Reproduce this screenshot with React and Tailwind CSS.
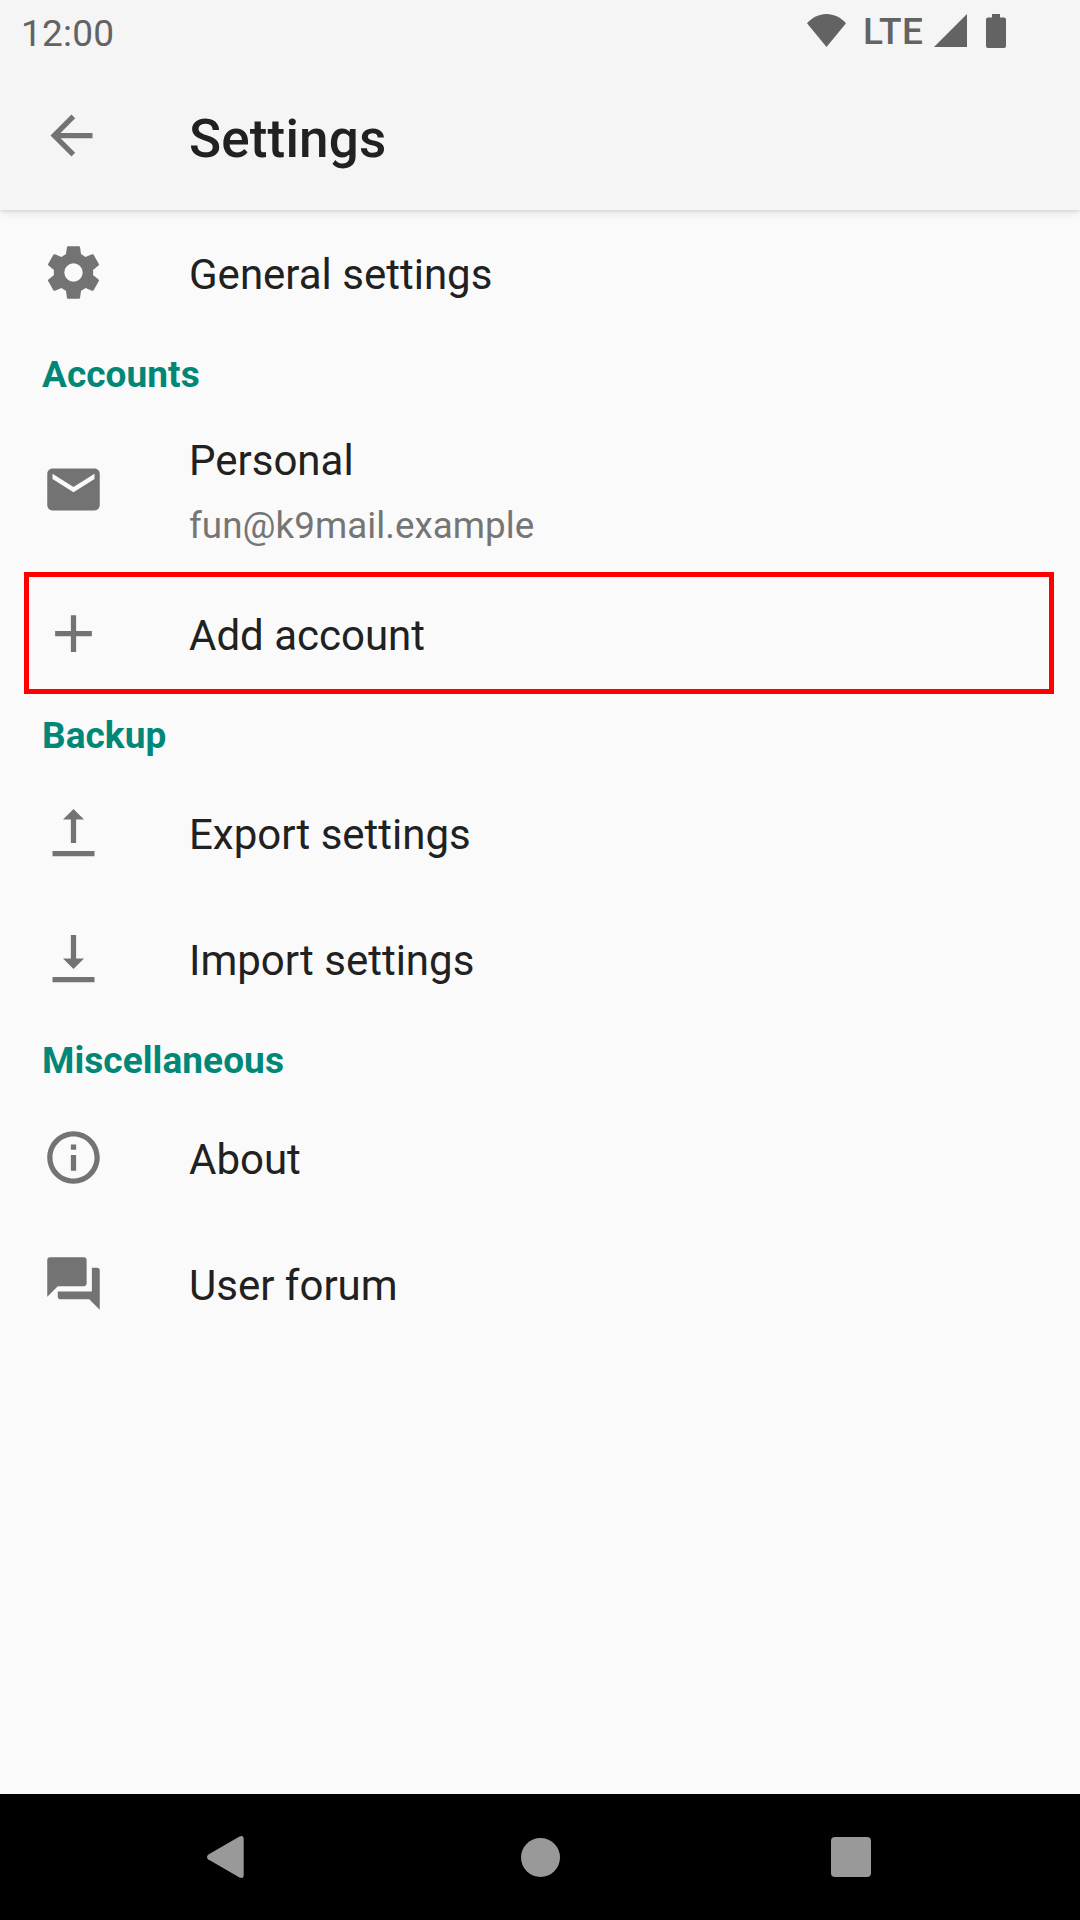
function Icon({ children, className = '' }) {
  return (
    <svg viewBox="0 0 24 24" className={`h-[63px] w-[63px] shrink-0 fill-[#737373] ${className}`} aria-hidden="true">
      {children}
    </svg>
  );
}

function StatusBar() {
  return (
    <div className="flex h-[63px] items-start justify-between pr-[74px] pl-[21px] text-[#636363]">
      <span className="mt-3 text-[37px] leading-[43px] tracking-[0.2px]">12:00</span>
      <div className="flex items-start">
        <svg viewBox="0 0 39 33" className="mt-[14px] h-[33px] w-[39px] fill-current" aria-hidden="true">
          <path d="M0 9.2C5 3.6 12 0 19.5 0S34 3.6 39 9.2L19.5 33Z" />
        </svg>
        <span className="mt-[10px] ml-[17px] w-[59px] text-[37px] leading-[43px] font-medium tracking-[0.5px]">LTE</span>
        <svg viewBox="0 0 33 33" className="mt-[14px] ml-3 h-[33px] w-[33px] fill-current" aria-hidden="true">
          <path d="M33 0V33H0Z" />
        </svg>
        <svg viewBox="0 0 20 34" className="mt-[14px] ml-[19px] h-[34px] w-5 fill-current" aria-hidden="true">
          <path d="M6 0h8v3.5h4a2 2 0 0 1 2 2V32a2 2 0 0 1-2 2H2a2 2 0 0 1-2-2V5.500a2 2 0 0 1 2-2h4Z" />
        </svg>
      </div>
    </div>
  );
}

function Header() {
  return (
    <header className="relative z-10 h-[210px] shrink-0 bg-[#f5f5f5] shadow-[0_3px_9px_rgba(0,0,0,0.09),0_1px_3px_rgba(0,0,0,0.10)]">
      <StatusBar />
      <div className="flex items-start pl-10">
        <Icon className="mt-[41px]">
          <path d="M20 11H7.830l5.590-5.590L12 4l-8 8 8 8 1.410-1.410L7.830 13H20v-2z" />
        </Icon>
        <h1 className="mt-[45px] ml-[86px] text-[53px] leading-[62px] font-medium tracking-[0.15px] text-[#212121]">Settings</h1>
      </div>
    </header>
  );
}

function Section({ children }) {
  return <h2 className="px-[42px] pt-[18px] text-[37px] leading-[43px] font-bold tracking-[0.06px] text-[#008777]">{children}</h2>;
}

function Row({ icon, title, highlighted }) {
  return (
    <div className="relative flex h-[126px] items-start pl-[42px]">
      <Icon className="mt-8">{icon}</Icon>
      <span className="mt-[41px] ml-[84px] text-[42px] leading-[49px] text-[#212121]">{title}</span>
      {highlighted && <div className="absolute inset-x-0 top-[2px] mr-[26px] ml-6 h-[122px] border-[5px] border-[#ff0000]" />}
    </div>
  );
}

const gear = (
  <path d="M12,15.5A3.5,3.5 0 0,1 8.5,12A3.5,3.5 0 0,1 12,8.5A3.5,3.5 0 0,1 15.5,12A3.5,3.5 0 0,1 12,15.5M19.43,12.97C19.47,12.65 19.5,12.33 19.5,12C19.5,11.67 19.47,11.34 19.43,11L21.54,9.37C21.73,9.22 21.78,8.95 21.66,8.73L19.66,5.27C19.54,5.05 19.27,4.96 19.05,5.05L16.56,6.05C16.04,5.66 15.5,5.32 14.87,5.07L14.5,2.42C14.46,2.18 14.25,2 14,2H10C9.75,2 9.54,2.18 9.5,2.42L9.13,5.07C8.5,5.32 7.96,5.66 7.44,6.05L4.95,5.05C4.73,4.96 4.46,5.05 4.34,5.27L2.34,8.73C2.21,8.95 2.27,9.22 2.46,9.37L4.57,11C4.53,11.34 4.5,11.67 4.5,12C4.5,12.33 4.53,12.65 4.57,12.97L2.46,14.63C2.27,14.78 2.21,15.05 2.34,15.27L4.34,18.73C4.46,18.95 4.73,19.03 4.95,18.95L7.44,17.94C7.96,18.34 8.5,18.68 9.13,18.93L9.5,21.58C9.54,21.82 9.75,22 10,22H14C14.25,22 14.46,21.82 14.5,21.58L14.87,18.93C15.5,18.67 16.04,18.34 16.56,17.94L19.05,18.95C19.27,19.03 19.54,18.95 19.66,18.73L21.66,15.27C21.78,15.05 21.73,14.78 21.54,14.63L19.43,12.97Z" />
);

const info = (
  <path d="M11 7h2v2h-2zm0 4h2v6h-2zm1-9C6.480 2 2 6.480 2 12s4.480 10 10 10 10-4.480 10-10S17.520 2 12 2zm0 18c-4.410 0-8-3.590-8-8s3.590-8 8-8 8 3.590 8 8-3.590 8-8 8z" />
);

const forum = (
  <path d="M21 6h-2v9H6v2c0 .55.450 1 1 1h11l4 4V7c0-.55-.450-1-1-1zm-4 6V3c0-.55-.450-1-1-1H3c-.55 0-1 .450-1 1v14l4-4h10c.55 0 1-.450 1-1z" />
);

function AccountRow() {
  return (
    <div className="flex h-[161px] items-start pl-[42px]">
      <Icon className="mt-[49px]">
        <path d="M20 4H4c-1.100 0-1.990.9-1.990 2L2 18c0 1.100.9 2 2 2h16c1.100 0 2-.9 2-2V6c0-1.100-.9-2-2-2zm0 4l-8 5-8-5V6l8 5 8-5v2z" />
      </Icon>
      <div className="ml-[84px] flex flex-col pt-[27px]">
        <span className="text-[42px] leading-[49px] text-[#212121]">Personal</span>
        <span className="mt-[19px] text-[36.750px] leading-[43px] tracking-[0.05px] text-[#757575]">fun@k9mail.example</span>
      </div>
    </div>
  );
}

function NavBar() {
  return (
    <nav className="flex h-[126px] shrink-0 items-center bg-black pl-[206px]">
      <svg viewBox="0 0 38 42" className="h-[42px] w-[38px] fill-[#999999]" aria-hidden="true">
        <path d="M2 18.700 33.500.5Q37.700-1 37.700 3V39Q37.700 43 33.500 41.500L2 23.300Q0 21 2 18.700Z" />
      </svg>
      <div className="ml-[276.500px] size-[39px] rounded-full bg-[#999999]" />
      <div className="ml-[271.500px] size-10 rounded-[4px] bg-[#999999]" />
    </nav>
  );
}

export default function App() {
  return (
    <div className="flex h-[1920px] w-[1080px] flex-col overflow-hidden bg-[#fafafa] font-['Roboto',sans-serif]">
      <Header />
      <main className="-mt-px flex-1">
        <Row title="General settings" icon={gear} />
        <div className="h-[74px]">
          <Section>Accounts</Section>
        </div>
        <AccountRow />
        <Row title="Add account" highlighted icon={<path d="M19 13h-6v6h-2v-6H5v-2h6V5h2v6h6z" />} />
        <div className="h-[73px]">
          <Section>Backup</Section>
        </div>
        <Row title="Export settings" icon={<path d="M4 19h16v2H4zM12 3l4 4h-3v9h-2V7H8z" />} />
        <Row title="Import settings" icon={<path d="M4 19h16v2H4zM11 3h2v9h3l-4 4-4-4h3z" />} />
        <div className="h-[73px]">
          <Section>Miscellaneous</Section>
        </div>
        <Row title="About" icon={info} />
        <Row title="User forum" icon={forum} />
      </main>
      <NavBar />
    </div>
  );
}
